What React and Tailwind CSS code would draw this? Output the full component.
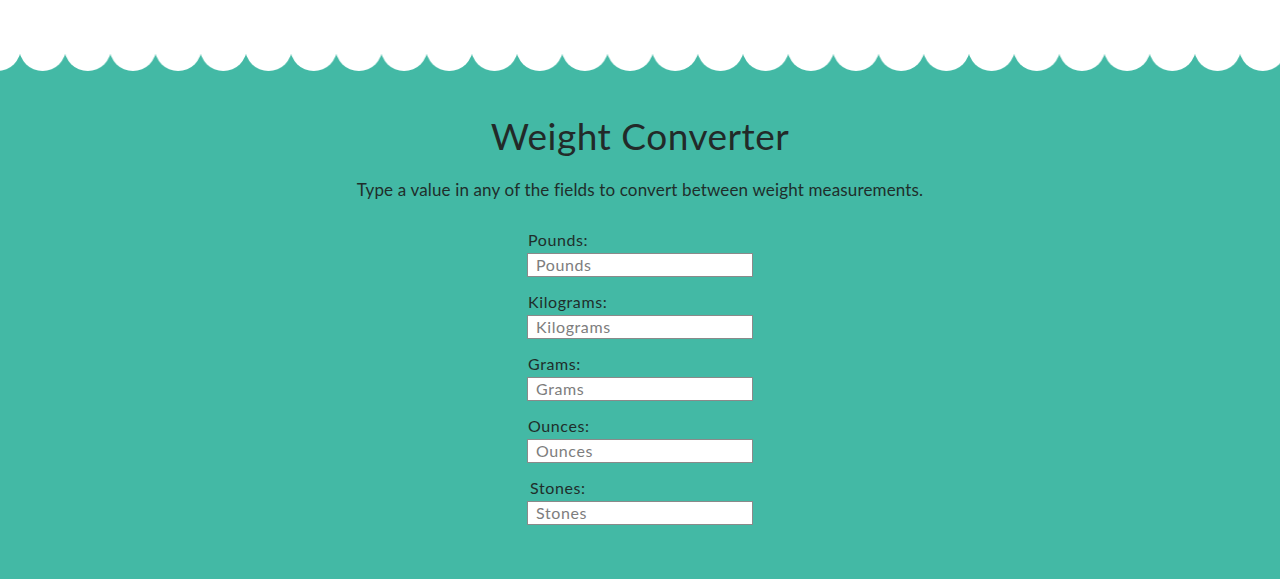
import { useState } from "react";

const FIELDS = [
  { key: "pounds", label: "Pounds:" },
  { key: "kilograms", label: "Kilograms:" },
  { key: "grams", label: "Grams:" },
  { key: "ounces", label: "Ounces:" },
  { key: "stones", label: "Stones:", nudge: true },
];

// factor to grams
const TO_GRAMS = {
  pounds: 453.59237,
  kilograms: 1000,
  grams: 1,
  ounces: 28.349523125,
  stones: 6350.29318,
};

function Scallops() {
  return (
    <svg className="block w-full h-[72px]" preserveAspectRatio="none" viewBox="0 0 1280 72">
      <defs>
        <pattern id="scallop" x="20" y="0" width="45.19" height="72" patternUnits="userSpaceOnUse">
          <circle cx="22.6" cy="47.6" r="23.4" fill="#ffffff" />
        </pattern>
      </defs>
      <rect x="0" y="0" width="1280" height="48" fill="#ffffff" />
      <rect x="0" y="0" width="1280" height="72" fill="url(#scallop)" />
    </svg>
  );
}

export default function App() {
  const [values, setValues] = useState({});

  const handleChange = (key, raw) => {
    if (raw === "" || isNaN(Number(raw))) {
      setValues({ [key]: raw });
      return;
    }
    const grams = Number(raw) * TO_GRAMS[key];
    const next = {};
    Object.keys(TO_GRAMS).forEach((k) => {
      next[k] = k === key ? raw : String(+(grams / TO_GRAMS[k]).toFixed(4));
    });
    setValues(next);
  };

  return (
    <div className="min-h-screen bg-[#43b9a5] font-['Lato','Open_Sans',sans-serif] text-[#1f2e2b]">
      <Scallops />

      <main className="flex flex-col items-center">
        <h1 className="mt-[42px] text-[37px] leading-[44px] tracking-[0.5px] text-[#222a29]">Weight Converter</h1>
        <p className="mt-[22px] text-[17px] leading-[20px] tracking-[0.15px]">
          Type a value in any of the fields to convert between weight measurements.
        </p>

        <form className="mt-[29px] w-[226px] flex flex-col gap-[14px]" onSubmit={(e) => e.preventDefault()}>
          {FIELDS.map((f) => (
            <div key={f.key} className="flex flex-col">
              <label htmlFor={f.key} className={`text-[16px] leading-[22px] mb-[2px] tracking-[0.6px] ${f.nudge ? "pl-[3px]" : "pl-[1px]"}`}>
                {f.label}
              </label>
              <input
                id={f.key}
                type="text"
                placeholder={f.label.replace(":", "")}
                value={values[f.key] || ""}
                onChange={(e) => handleChange(f.key, e.target.value)}
                className="h-[24px] w-full bg-white border border-[#8a8a8a] px-[8px] text-[16px] tracking-[0.6px] text-[#333] placeholder:text-[#7d7d7d] outline-none"
              />
            </div>
          ))}
        </form>
      </main>
    </div>
  );
}
